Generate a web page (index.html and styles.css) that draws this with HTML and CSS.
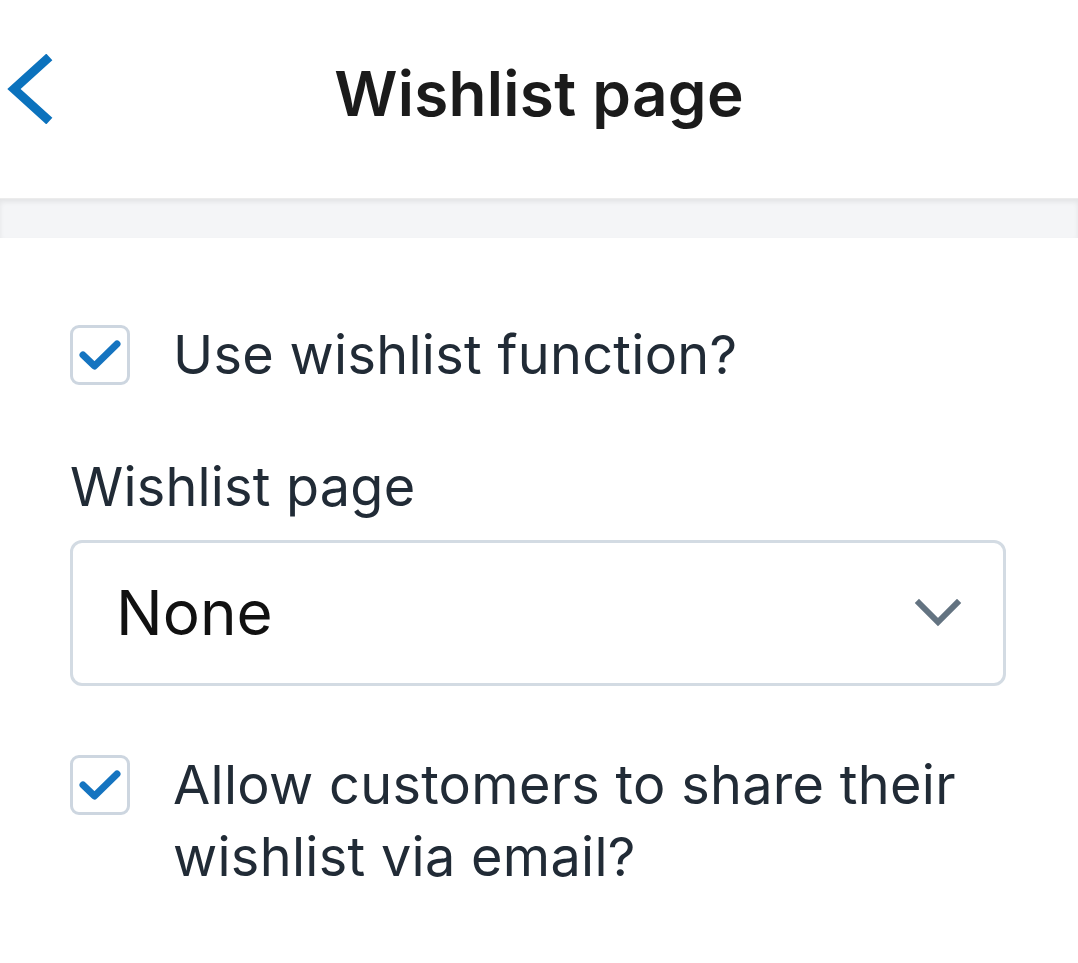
FILE: index.html
```html
<!DOCTYPE html>
<html lang="en">
<head>
<meta charset="utf-8">
<title>Wishlist page</title>
<link rel="stylesheet" href="styles.css">
</head>
<body>
<header class="topbar">
  <button class="back" aria-label="Back">
    <svg viewBox="0 0 50 70" width="50" height="70"><path d="M42 6 L10 35 L42 64" fill="none" stroke="#0b72bd" stroke-width="9" stroke-linecap="square"/></svg>
  </button>
  <h1 class="title">Wishlist page</h1>
</header>
<div class="band"></div>
<main class="panel">
  <label class="check-row">
    <span class="box"><svg viewBox="0 0 54 54" width="54" height="54"><path d="M10 27 L21.5 38 L44 16" fill="none" stroke="#1574c0" stroke-width="7" stroke-linecap="round" stroke-linejoin="round"/></svg></span>
    <span class="check-text">Use wishlist function?</span>
  </label>
  <div class="field">
    <div class="field-label">Wishlist page</div>
    <div class="select">
      <span class="select-value">None</span>
      <svg class="caret" viewBox="0 0 50 30" width="50" height="30"><path d="M6 5 L25 24 L44 5" fill="none" stroke="#637381" stroke-width="6" stroke-linecap="square"/></svg>
    </div>
  </div>
  <label class="check-row top">
    <span class="box"><svg viewBox="0 0 54 54" width="54" height="54"><path d="M10 27 L21.5 38 L44 16" fill="none" stroke="#1574c0" stroke-width="7" stroke-linecap="round" stroke-linejoin="round"/></svg></span>
    <span class="check-text">Allow customers to share their<br>wishlist via email?</span>
  </label>
</main>
</body>
</html>
```
FILE: styles.css
```css
html, body {
  margin: 0;
  padding: 0;
  background: #ffffff;
}
body {
  font-family: Inter, "Noto Sans", sans-serif;
  color: #212b36;
  width: 1078px;
  height: 963px;
  overflow: hidden;
}
.topbar {
  height: 199px;
  display: flex;
  align-items: center;
  justify-content: center;
  position: relative;
  border-bottom: 1px solid #ececec;
  box-sizing: border-box;
}
.back {
  position: absolute;
  left: 4px;
  top: 54px;
  padding: 0;
  border: 0;
  background: none;
  display: flex;
}
.title {
  margin: 0 0 10px 0;
  font-size: 62px;
  font-weight: 600;
  color: #1b1b1b;
  letter-spacing: 0.3px;
  line-height: 72px;
}
.band {
  height: 39px;
  background: #f4f5f7;
  box-shadow: inset 0 3px 5px rgba(0, 0, 0, 0.07);
}
.panel {
  padding: 81px 72px 0 70px;
  display: flex;
  flex-direction: column;
}
.check-row {
  display: flex;
  align-items: center;
  gap: 43px;
}
.check-row.top {
  align-items: flex-start;
  margin-top: 63px;
}
.check-row.top .box {
  margin-top: 6px;
}
.box {
  flex: 0 0 auto;
  width: 60px;
  height: 60px;
  box-sizing: border-box;
  border: 3px solid #cdd6e0;
  border-radius: 9px;
  background: #fff;
  display: flex;
  align-items: center;
  justify-content: center;
}
.box svg {
  display: block;
}
.check-text {
  font-size: 54px;
  line-height: 72px;
  letter-spacing: 0.3px;
  color: #212b36;
}
.field {
  margin-top: 60px;
  display: flex;
  flex-direction: column;
  gap: 17px;
}
.field-label {
  font-size: 54px;
  line-height: 72px;
  letter-spacing: 0.2px;
  color: #212b36;
}
.select {
  height: 146px;
  box-sizing: border-box;
  border: 3px solid #d3dbe3;
  border-radius: 12px;
  display: flex;
  align-items: center;
  justify-content: space-between;
  padding: 0 40px 0 43px;
}
.select-value {
  font-size: 62px;
  color: #111;
  line-height: 72px;
}
.caret {
  display: block;
}
```
